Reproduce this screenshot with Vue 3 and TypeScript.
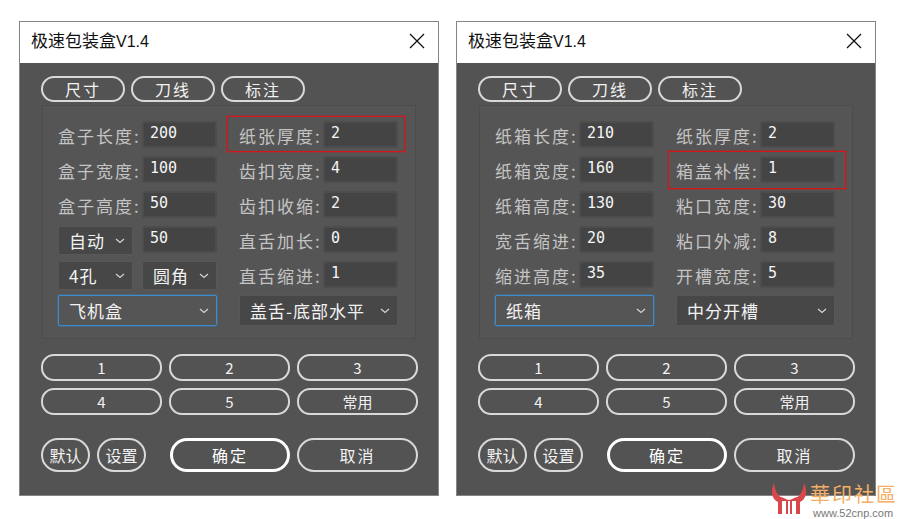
<script setup lang="ts">
type Part = { kind: 'label' | 'input' | 'select'; text: string; size?: string; active?: boolean }
type Row = { parts: Part[]; mark?: boolean }

const label = (text: string): Part => ({ kind: 'label', text })
const input = (text: string): Part => ({ kind: 'input', text })
const select = (text: string, size = 'small', active = false): Part => ({ kind: 'select', text, size, active })
const field = (name: string, value: string, mark = false): Row => ({ parts: [label(name + ':'), input(value)], mark })

const windows: { left: Row[]; right: Row[]; markClass: string }[] = [
  {
    markClass: 'mark-a',
    left: [
      field('盒子长度', '200'),
      field('盒子宽度', '100'),
      field('盒子高度', '50'),
      { parts: [select('自动'), input('50')] },
      { parts: [select('4孔'), select('圆角')] },
      { parts: [select('飞机盒', 'wide', true)] }
    ],
    right: [
      field('纸张厚度', '2', true),
      field('齿扣宽度', '4'),
      field('齿扣收缩', '2'),
      field('直舌加长', '0'),
      field('直舌缩进', '1'),
      { parts: [select('盖舌-底部水平', 'wide')] }
    ]
  },
  {
    markClass: 'mark-b',
    left: [
      field('纸箱长度', '210'),
      field('纸箱宽度', '160'),
      field('纸箱高度', '130'),
      field('宽舌缩进', '20'),
      field('缩进高度', '35'),
      { parts: [select('纸箱', 'wide', true)] }
    ],
    right: [
      field('纸张厚度', '2'),
      field('箱盖补偿', '1', true),
      field('粘口宽度', '30'),
      field('粘口外减', '8'),
      field('开槽宽度', '5'),
      { parts: [select('中分开槽', 'wide')] }
    ]
  }
]

const tabs = ['尺寸', '刀线', '标注']
const presets = ['1', '2', '3', '4', '5', '常用']
</script>

<template>
  <div class="page">
    <div v-for="(win, i) in windows" :key="i" class="window">
      <div class="titlebar">
        <span class="title">极速包装盒<span class="ver">V1.4</span></span>
        <svg class="close" width="16" height="16" viewBox="0 0 16 16">
          <path d="M1 1L15 15M15 1L1 15" stroke="#111" stroke-width="1.3" fill="none" />
        </svg>
      </div>
      <div class="body">
        <div class="tabs">
          <button v-for="t in tabs" :key="t" class="pill tab">{{ t }}</button>
        </div>
        <div class="panel">
          <div v-for="(col, c) in [win.left, win.right]" :key="c" class="col">
            <div v-for="(row, r) in col" :key="r" class="row" :class="[{ last: r === 5 }, row.mark ? win.markClass : '']">
              <template v-for="(part, p) in row.parts" :key="p">
                <span v-if="part.kind === 'label'" class="label">{{ part.text }}</span>
                <div v-else-if="part.kind === 'input'" class="input">{{ part.text }}</div>
                <div v-else class="select" :class="[part.size, { active: part.active }]">
                  <span>{{ part.text }}</span>
                  <svg class="chev" width="10" height="6" viewBox="0 0 10 6">
                    <path d="M1 1L5 4.5L9 1" stroke="#d5d5d5" stroke-width="1.2" fill="none" />
                  </svg>
                </div>
              </template>
            </div>
          </div>
        </div>
        <div class="presets">
          <button v-for="p in presets" :key="p" class="pill preset">{{ p }}</button>
        </div>
        <div class="actions">
          <button class="pill small-btn">默认</button>
          <button class="pill small-btn">设置</button>
          <button class="pill action primary">确定</button>
          <button class="pill action">取消</button>
        </div>
      </div>
    </div>

    <div class="stamp">
      <svg class="stamp-logo" width="38" height="32" viewBox="0 0 38 32">
        <path d="M4 0C0 9 2 16 8 19V31H12V15C8 13 5 8 4 0Z" fill="#d9474a" />
        <path d="M34 0C38 9 36 16 30 19V31H26V15C30 13 33 8 34 0Z" fill="#d9474a" />
        <path d="M10 14C14 14 16 17 19 17C22 17 24 14 28 14V18H10Z" fill="#d9474a" />
        <path d="M16 18H18V31H16ZM20 18H22V31H20Z" fill="#d9474a" />
      </svg>
      <div class="stamp-text">
        <span class="stamp-name">華印社區</span>
        <span class="stamp-url">www.52cnp.com</span>
      </div>
    </div>
  </div>
</template>

<style>
html,
body {
  background: #fff;
}
</style>

<style scoped>
.page {
  position: relative;
  width: 898px;
  height: 519px;
  overflow: hidden;
  box-sizing: border-box;
  padding: 21px 0 0 19px;
  display: flex;
  align-items: flex-start;
  gap: 17px;
  font-family: "Noto Sans CJK SC", sans-serif;
}
.window {
  width: 420px;
  height: 475px;
  box-sizing: border-box;
  border: 1px solid #858585;
  display: flex;
  flex-direction: column;
  background: #535353;
}
.titlebar {
  height: 41px;
  box-sizing: border-box;
  background: #fff;
  display: flex;
  align-items: center;
  justify-content: space-between;
  padding: 0 13px 4px 11px;
  flex: none;
}
.title {
  font-size: 17px;
  line-height: 24px;
  color: #111;
}
.ver {
  font-family: "Liberation Sans", sans-serif;
  font-size: 16px;
}
.body {
  flex: 1;
  padding: 13px 19px 0 21px;
}
button {
  font-family: inherit;
  padding: 0;
  background: none;
  cursor: pointer;
}
.pill {
  box-sizing: border-box;
  border: 2px solid #d9d9d9;
  color: #f2f2f2;
  display: flex;
  align-items: center;
  justify-content: center;
  font-size: 16px;
  line-height: 1;
}
.tabs {
  display: flex;
  gap: 6px;
}
.tab {
  width: 84px;
  height: 26px;
  border-radius: 13px;
  letter-spacing: 2px;
}
.panel {
  margin: 3px 2px 0 1px;
  width: 374px;
  height: 234px;
  box-sizing: border-box;
  border: 1px solid #4c4c4c;
  background: #555;
  padding: 15px 0 0 15px;
  display: flex;
  gap: 22px;
}
.col {
  width: 159px;
  display: grid;
  grid-auto-rows: 29px;
  row-gap: 6px;
}
.row {
  position: relative;
  display: flex;
  align-items: flex-start;
  justify-content: space-between;
}
.row.last {
  margin-top: -1px;
}
.mark-a::after,
.mark-b::after {
  content: "";
  position: absolute;
  border: 1px solid #d91414;
  box-shadow: 0 0 0 1px rgba(217, 20, 20, 0.3);
  box-sizing: border-box;
}
.mark-a::after {
  left: -12px;
  right: -7px;
  top: -5px;
  height: 36px;
}
.mark-b::after {
  left: -8px;
  right: -11px;
  top: -5px;
  height: 38px;
}
.label {
  font-size: 17px;
  letter-spacing: 2px;
  line-height: 30px;
  color: #c4c4c4;
  white-space: nowrap;
  margin-right: -4px;
}
.input {
  width: 75px;
  height: 27px;
  box-sizing: border-box;
  background: #444;
  border: 2px solid #4d4d4d;
  border-radius: 2px;
  padding-left: 6px;
  color: #f5f5f5;
  font-family: "DejaVu Sans Mono", monospace;
  font-size: 15px;
  line-height: 21px;
}
.select {
  box-sizing: border-box;
  height: 29px;
  width: 75px;
  background: #474747;
  border: 1px solid #585858;
  border-radius: 2px;
  display: flex;
  align-items: center;
  justify-content: space-between;
  padding: 0 7px 0 10px;
  color: #f2f2f2;
  font-size: 17px;
  letter-spacing: 1px;
  white-space: nowrap;
}
.select.wide {
  width: 100%;
  height: 31px;
}
.select.active {
  background: #555;
  border-color: #3d8bd0;
  box-shadow: 0 0 0 1px rgba(61, 139, 208, 0.3);
}
.chev {
  flex: none;
}
.presets {
  margin-top: 15px;
  display: grid;
  grid-template-columns: repeat(3, 121px);
  grid-auto-rows: 27px;
  column-gap: 7px;
  row-gap: 7px;
}
.preset {
  border-radius: 13px;
  font-size: 15px;
}
.actions {
  margin-top: 23px;
  display: flex;
}
.small-btn {
  width: 49px;
  height: 34px;
  border-radius: 17px;
  margin-right: 7px;
}
.action {
  width: 121px;
  height: 34px;
  border-radius: 17px;
  letter-spacing: 2px;
  margin-left: 7px;
}
.action.primary {
  width: 120px;
  margin-left: 17px;
  border: 3px solid #fff;
  color: #fff;
}
.stamp {
  position: absolute;
  left: 770px;
  top: 483px;
  width: 128px;
  display: flex;
  gap: 2px;
}
.stamp-logo {
  flex: none;
}
.stamp-text {
  display: flex;
  flex-direction: column;
}
.stamp-name {
  font-size: 20px;
  line-height: 22px;
  letter-spacing: 2px;
  color: #f3b066;
  white-space: nowrap;
}
.stamp-url {
  margin-top: 3px;
  padding-left: 3px;
  font-family: "Liberation Sans", sans-serif;
  font-size: 11px;
  line-height: 10px;
  color: #777;
  white-space: nowrap;
}
</style>
